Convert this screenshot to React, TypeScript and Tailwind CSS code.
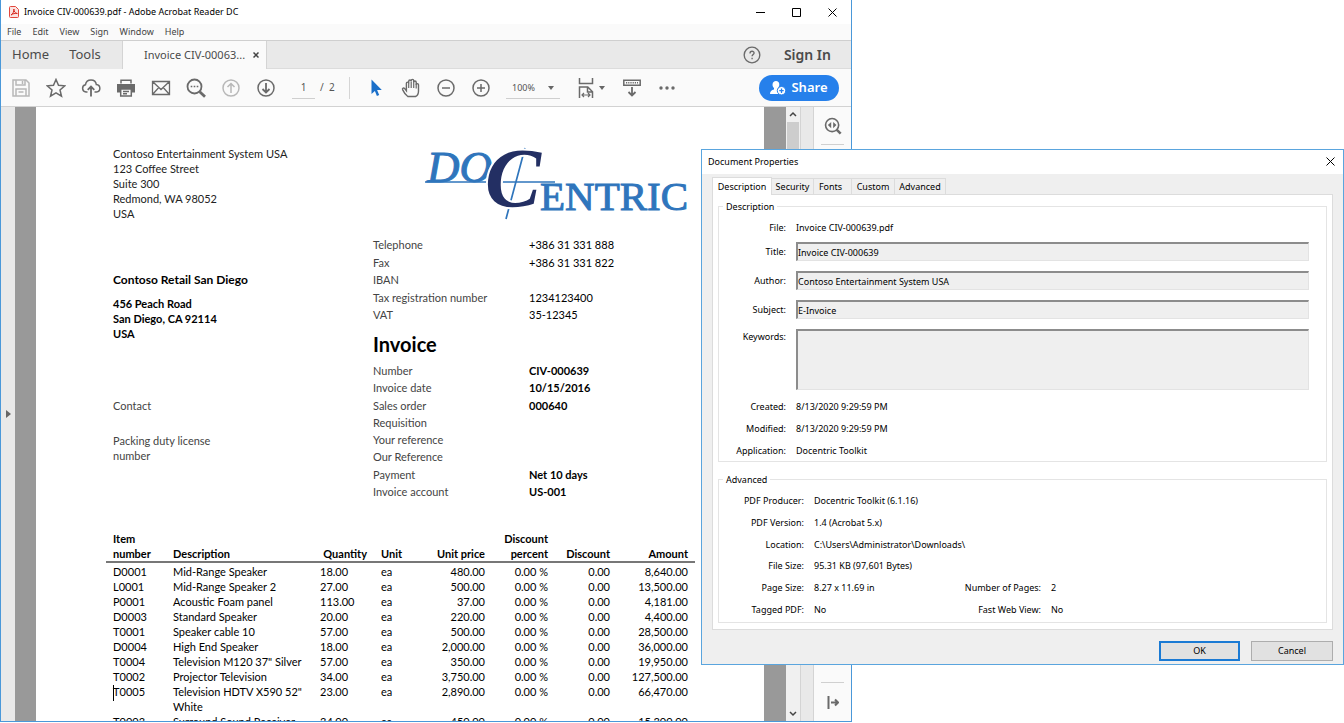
import type { ReactNode } from "react";
import { clsx } from "clsx";

function Icon({ children, size = 20, className }: { children: ReactNode; size?: number; className?: string }) {
  return (
    <svg
      width={size}
      height={size}
      viewBox="0 0 20 20"
      fill="none"
      stroke="currentColor"
      strokeWidth="1.5"
      className={className}
      aria-hidden="true"
    >
      {children}
    </svg>
  );
}

function ToolButton({ label, dim, children }: { label: string; dim?: boolean; children: ReactNode }) {
  return (
    <button
      type="button"
      aria-label={label}
      className={clsx("flex h-8 w-[35px] shrink-0 items-center justify-center", dim ? "text-[#b8b8b8]" : "text-[#6a6a6a]")}
    >
      <Icon>{children}</Icon>
    </button>
  );
}

function TitleBar() {
  return (
    <header className="flex h-6 shrink-0 items-center bg-white pr-px pl-2">
      <svg width="10" height="12" viewBox="0 0 10 12" fill="none" aria-hidden="true">
        <path d="M1.5.5h5l3 3v7a1 1 0 0 1-1 1h-7a1 1 0 0 1-1-1v-9a1 1 0 0 1 1-1Z" fill="#fbe3e1" stroke="#e2473c" />
        <path d="M2 9c2-1 3-3.500 2.900-6C5 5.500 6 7.300 8.300 7.500 6 7.200 4 7.600 2 9Z" stroke="#d9281e" />
      </svg>
      <h1 className="ml-[5px] flex-1 text-[9px] leading-3 text-black">Invoice CIV-000639.pdf - Adobe Acrobat Reader DC</h1>
      <div className="flex text-black">
        <button type="button" aria-label="Minimize" className="flex h-6 w-9 items-center justify-center">
          <svg width="9" height="9" viewBox="0 0 9 9" stroke="currentColor" aria-hidden="true"><path d="M0 4.500h9" /></svg>
        </button>
        <button type="button" aria-label="Maximize" className="flex h-6 w-9 items-center justify-center">
          <svg width="9" height="9" viewBox="0 0 9 9" fill="none" stroke="currentColor" aria-hidden="true"><path d="M.5.5h8v8h-8z" /></svg>
        </button>
        <button type="button" aria-label="Close" className="flex h-6 w-9 items-center justify-center">
          <svg width="9" height="9" viewBox="0 0 9 9" stroke="currentColor" aria-hidden="true"><path d="M.5.5l8 8M8.500.5l-8 8" /></svg>
        </button>
      </div>
    </header>
  );
}

const menus = ["File", "Edit", "View", "Sign", "Window", "Help"];

function MenuBar() {
  return (
    <nav className="flex h-4 shrink-0 items-center gap-[11px] bg-[#fafafa] pl-[6px] text-[9px] leading-3 text-[#444]">
      {menus.map((m) => (
        <button key={m} type="button">{m}</button>
      ))}
    </nav>
  );
}

function TabBar() {
  return (
    <div className="flex h-[29px] shrink-0 border-t border-[#cfcfcf] bg-[#e9e9e9] text-[#4b4b4b]">
      <button type="button" className="w-[59px] text-[13px]">Home</button>
      <button type="button" className="w-[50px] text-[13px]">Tools</button>
      <div className="ml-3 flex w-[145px] items-center justify-between border-x border-[#d4d4d4] bg-[#fafafa] pr-[7px] pl-[21px]">
        <span className="text-[11px] whitespace-nowrap">Invoice CIV-00063...</span>
        <button type="button" aria-label="Close tab">
          <svg width="6" height="6" viewBox="0 0 6 6" stroke="#444" strokeWidth="1.500" aria-hidden="true"><path d="M.5.5l5 5M5.500.5l-5 5" /></svg>
        </button>
      </div>
      <div className="flex flex-1 items-center justify-end gap-[23px] border-b border-[#dcdcdc] pr-5">
        <button type="button" aria-label="Help" className="text-[#6a6a6a]">
          <Icon size={18}>
            <circle cx="10" cy="10" r="8.700" />
            <path d="M7.800 8.200c0-3.200 4.600-3 4.500-.3 0 1.600-2.200 1.700-2.200 3.600M10.100 13v1.600" />
          </Icon>
        </button>
        <button type="button" className="text-sm font-semibold">Sign In</button>
      </div>
    </div>
  );
}

function Toolbar() {
  return (
    <div className="flex h-[38px] shrink-0 items-center border-b border-[#d2d2d2] bg-[#fafafa] pl-0.5 text-[#555]">
      <ToolButton label="Save" dim>
        <path d="M2 2h13l3 3v13H2zM5 2v5h9V2M11.500 3v3M5 18v-7h10v7M7.500 14h5" />
      </ToolButton>
      <ToolButton label="Bookmark">
        <path d="M10 1.500l2.500 5.800 6.300.5-4.800 4.200 1.500 6.200L10 14.900l-5.500 3.300L6 12 1.200 7.800l6.300-.5z" />
      </ToolButton>
      <ToolButton label="Upload">
        <path d="M6.500 14H5a3.700 3.700 0 0 1-.5-7.300C5 3.500 7.500 2 10 2c3 0 5 2 5.300 4.500C20 7 20 13.500 15.500 14h-2" />
        <path d="M10 18.500V9M6.700 11.800 10 8.500l3.300 3.300" strokeWidth="1.800" />
      </ToolButton>
      <ToolButton label="Print">
        <path d="M5 5.500V2.200h10v3.300" />
        <path d="M1 6h18v8.500h-3V11H4v3.500H1z" fill="currentColor" stroke="none" />
        <path d="M4.700 11h10.600v7H4.700zM7 13.500h6M7 15.800h4" />
      </ToolButton>
      <ToolButton label="Mail">
        <path d="M1.500 3.500h17v13h-17zM1.500 3.500 10 11.500l8.500-8M1.500 16.500l6.300-7M18.500 16.500l-6.300-7" strokeWidth="1.300" />
      </ToolButton>
      <ToolButton label="Find">
        <circle cx="8.500" cy="8.500" r="7" strokeWidth="1.800" />
        <path d="M13.700 13.700l5.300 5" strokeWidth="2.800" />
        <path d="M4.700 8.500h1.600M7.700 8.500h1.600M10.700 8.500h1.600" />
      </ToolButton>
      <ToolButton label="Previous page" dim>
        <circle cx="10" cy="10" r="8" />
        <path d="M10 15V5.500M6.500 9 10 5.500 13.500 9" />
      </ToolButton>
      <ToolButton label="Next page">
        <circle cx="10" cy="10" r="8" />
        <path d="M10 5v9.500M6.500 11l3.500 3.500 3.500-3.500" strokeWidth="1.800" />
      </ToolButton>
      <input
        aria-label="Page number"
        defaultValue="1"
        className="ml-[9px] h-[22px] w-[23px] border-b border-[#cfcfcf] bg-transparent text-center text-[10px]"
      />
      <span className="ml-[5px] w-[14px] text-[10px] whitespace-nowrap">/&nbsp; 2</span>
      <span className="mr-2 ml-[15px] h-[22px] w-px bg-[#d5d5d5]" />
      <ToolButton label="Select">
        <path d="M5.500 1.500v14.500l3.400-3.100 2 5 2.300-1-2.100-4.800h4.700z" fill="#1a6fc9" stroke="none" />
      </ToolButton>
      <ToolButton label="Pan">
        <path
          d="M6.800 18.500C5 17.300 2.700 14 1.600 11.600c-.6-1.500 1.200-2.200 2.100-1l1.700 2.200V5.300c0-1.600 2.300-1.600 2.300 0V3.200c0-1.700 2.500-1.700 2.500 0v-.6c0-1.600 2.500-1.600 2.500 0v1.600c0-1.600 2.500-1.600 2.500 0v2.500c0-1.500 2.300-1.500 2.300 0V13c0 3-1.300 4.800-3 5.500z"
          strokeWidth="1.400"
        />
        <path d="M7.700 5v5M10.200 3.500V10M12.700 4v6M15.200 6v4.500" strokeWidth="1.200" />
      </ToolButton>
      <ToolButton label="Zoom out">
        <circle cx="10" cy="10" r="8" />
        <path d="M6 10h8" />
      </ToolButton>
      <ToolButton label="Zoom in">
        <circle cx="10" cy="10" r="8" />
        <path d="M6 10h8M10 6v8" />
      </ToolButton>
      <div className="relative mr-3 ml-2 h-[22px] w-[54px] border-b border-[#cfcfcf]">
        <select aria-label="Zoom level" className="block h-[22px] w-full appearance-none bg-transparent pl-[6px] text-[9px] leading-[22px]">
          <option>100%</option>
        </select>
        <svg width="6" height="4" viewBox="0 0 6 4" className="absolute top-[9px] right-[6px]" aria-hidden="true"><path d="M0 0h6L3 4z" fill="#666" /></svg>
      </div>
      <button type="button" aria-label="Fit page" className="flex h-8 w-9 items-center justify-center gap-[3px] text-[#6a6a6a]">
        <Icon>
          <path d="M3.500 0v5.500h13V0M3.500 20V9h8.300l4.700 4.700V20M11.500 9v5h5" />
          <path d="M6 17h8M8 15l-2 2 2 2M12 15l2 2-2 2" strokeWidth="1.200" />
        </Icon>
        <svg width="6" height="4" viewBox="0 0 6 4" aria-hidden="true"><path d="M0 0h6L3 4z" fill="#666" /></svg>
      </button>
      <div className="w-1.5" />
      <ToolButton label="Read mode">
        <path d="M1.800 2.300h16.400v5H1.800z" />
        <path d="M4 4.800h12" strokeWidth="1.500" strokeDasharray="1.200 1" />
        <path d="M10 9v8.500M6.500 14l3.500 3.500 3.500-3.500" strokeWidth="1.800" />
      </ToolButton>
      <ToolButton label="More tools">
        <g fill="currentColor" stroke="none">
          <circle cx="4" cy="10" r="1.700" />
          <circle cx="10" cy="10" r="1.700" />
          <circle cx="16" cy="10" r="1.700" />
        </g>
      </ToolButton>
      <button
        type="button"
        className="mr-3 ml-auto flex h-[26px] w-20 items-center justify-center gap-[5px] rounded-full bg-[#2680eb] text-[13px] font-semibold text-white"
      >
        <svg width="16" height="14" viewBox="0 0 16 14" fill="#fff" aria-hidden="true">
          <path d="M6 0c4.200 0 4 5.500 1.800 7 0 1 .5 1.500 1.500 2L8 13H0c0-3 1.500-3.700 4-4.500V7C1.800 5.500 1.800 0 6 0Z" />
          <circle cx="11.500" cy="9.700" r="4.200" stroke="#2680eb" />
          <path d="M11.500 7.500v4.400M9.300 9.700h4.400" stroke="#2680eb" strokeWidth="1.300" />
        </svg>
        Share
      </button>
    </div>
  );
}

function Logo() {
  return (
    <svg width="268" height="74" viewBox="0 0 268 74" className="ml-[51px] overflow-visible" role="img" aria-label="Docentric">
      <g fontFamily="Liberation Serif, serif" fill="#2f75bc" stroke="#2f75bc" strokeWidth="1">
        <text x="3" y="36" fontSize="45" fontStyle="italic">DO</text>
        <text x="116" y="64" fontSize="41">ENTRIC</text>
      </g>
      <path d="M1 36h130M101 2 82 73" stroke="#2f75bc" strokeWidth="1.700" />
      <text
        x="61"
        y="61"
        fontFamily="Liberation Serif, serif"
        fontSize="84"
        fontStyle="italic"
        fontWeight="bold"
        fill="#232f63"
        stroke="#fff"
        strokeWidth="4"
        paintOrder="stroke"
      >
        C
      </text>
    </svg>
  );
}

const company = [
  ["Telephone", "+386 31 331 888"],
  ["Fax", "+386 31 331 822"],
  ["IBAN", ""],
  ["Tax registration number", "1234123400"],
  ["VAT", "35-12345"],
];

const invoice = [
  ["Number", "CIV-000639"],
  ["Invoice date", "10/15/2016"],
  ["Sales order", "000640"],
  ["Requisition", ""],
  ["Your reference", ""],
  ["Our Reference", ""],
  ["Payment", "Net 10 days"],
  ["Invoice account", "US-001"],
];

const lines = [
  ["D0001", "Mid-Range Speaker", "18.00", "480.00", "8,640.00"],
  ["L0001", "Mid-Range Speaker 2", "27.00", "500.00", "13,500.00"],
  ["P0001", "Acoustic Foam panel", "113.00", "37.00", "4,181.00"],
  ["D0003", "Standard Speaker", "20.00", "220.00", "4,400.00"],
  ["T0001", "Speaker cable 10", "57.00", "500.00", "28,500.00"],
  ["D0004", "High End Speaker", "18.00", "2,000.00", "36,000.00"],
  ["T0004", 'Television M120 37" Silver', "57.00", "350.00", "19,950.00"],
  ["T0002", "Projector Television", "34.00", "3,750.00", "127,500.00"],
  ["T0005", 'Television HDTV X590 52" White', "23.00", "2,890.00", "66,470.00"],
  ["T0003", "Surround Sound Receiver", "34.00", "450.00", "15,300.00"],
];

// row the text cursor is parked on
const caretItem = "T0005";

function Facts({ rows, bold, className }: { rows: string[][]; bold?: boolean; className?: string }) {
  return (
    <dl className={clsx("flex flex-col justify-between leading-[17px]", className)}>
      {rows.map(([label, value]) => (
        <div key={label} className="flex h-[17px]">
          <dt className="w-[156px] text-[#444]">{label}</dt>
          <dd className={clsx("text-black", bold && "font-bold")}>{value}</dd>
        </div>
      ))}
    </dl>
  );
}

function LineItems() {
  return (
    <table className="mt-[31px] w-[589px] table-fixed text-black">
      <colgroup>
        <col className="w-[60px]" />
        <col className="w-[147px]" />
        <col className="w-[61px]" />
        <col className="w-[54px]" />
        <col className="w-[64px]" />
        <col className="w-[63px]" />
        <col className="w-[62px]" />
        <col className="w-[78px]" />
      </colgroup>
      <thead>
        <tr className="border-b-2 border-[#777] text-left align-bottom *:px-[7px] *:font-bold">
          <th>Item<br />number</th>
          <th>Description</th>
          <th className="text-right">Quantity</th>
          <th>Unit</th>
          <th className="text-right whitespace-nowrap">Unit price</th>
          <th className="text-right">Discount percent</th>
          <th className="text-right">Discount</th>
          <th className="text-right">Amount</th>
        </tr>
      </thead>
      <tbody className="before:block before:h-px">
        {lines.map(([item, name, qty, price, amount]) => (
          <tr key={item} className="align-top *:px-[7px]">
            <td>
              <span className="relative">
                {item === caretItem && <span className="absolute top-0 left-0 h-4 w-px bg-black" />}
                {item}
              </span>
            </td>
            <td>{name}</td>
            <td>{qty}</td>
            <td>ea</td>
            <td className="text-right">{price}</td>
            <td className="text-right whitespace-nowrap">0.00 %</td>
            <td className="text-right">0.00</td>
            <td className="text-right">{amount}</td>
          </tr>
        ))}
      </tbody>
    </table>
  );
}

function InvoicePage() {
  return (
    <article className="min-w-0 flex-1 overflow-hidden bg-white pt-[39px] pl-[70px] font-['Lato',sans-serif] text-[11px] leading-[15px]">
      <div className="flex pl-[7px]">
        <div className="w-[260px] text-[#222]">
          <address className="not-italic">
            Contoso Entertainment System USA<br />
            123 Coffee Street<br />
            Suite 300<br />
            Redmond, WA 98052<br />
            USA
          </address>
          <h2 className="mt-[50px] text-xs leading-[18px] font-bold text-black">Contoso Retail San Diego</h2>
          <address className="mt-[7px] font-bold text-black not-italic">
            456 Peach Road<br />
            San Diego, CA 92114<br />
            USA
          </address>
          <p className="mt-[57px] text-[#444]">Contact</p>
          <p className="mt-5 w-[120px] text-[#444]">Packing duty license number</p>
        </div>
        <div>
          <Logo />
          <Facts rows={company} className="mt-4 h-[87px]" />
          <h2 className="mt-[9px] text-xl leading-6 font-bold text-black">Invoice</h2>
          <Facts rows={invoice} bold className="mt-[6px] h-[138px]" />
        </div>
      </div>
      <LineItems />
    </article>
  );
}

function Viewer() {
  return (
    <div className="flex min-h-0 flex-1">
      <button type="button" aria-label="Show navigation pane" className="flex w-[14px] shrink-0 items-center justify-center bg-[#e9e9e9]">
        <svg width="5" height="8" viewBox="0 0 5 8" aria-hidden="true"><path d="M0 0v8l5-4z" fill="#666" /></svg>
      </button>
      <div className="w-[21px] shrink-0 bg-[#999]" />
      <InvoicePage />
      <div className="w-[22px] shrink-0 bg-[#999]" />
      <div className="flex w-[14px] shrink-0 flex-col items-center justify-between bg-[#f0f0f0] text-[#444]">
        <div className="flex h-[300px] w-full flex-col items-center">
          <svg width="8" height="15" viewBox="0 0 8 15" fill="none" stroke="currentColor" strokeWidth="1.500" aria-hidden="true"><path d="M1 9l3-3 3 3" /></svg>
          <div className="w-3 flex-1 bg-[#cdcdcd]" />
        </div>
        <svg width="8" height="15" viewBox="0 0 8 15" fill="none" stroke="currentColor" strokeWidth="1.500" aria-hidden="true"><path d="M1 6l3 3 3-3" /></svg>
      </div>
      <div className="w-[14px] shrink-0 border-x border-[#d4d4d4] bg-[#e9e9e9]" />
      <aside className="flex w-[37px] shrink-0 flex-col items-center justify-between bg-[#fafafa] pb-2 text-[#6a6a6a]">
        <button type="button" aria-label="Search tools" className="flex h-[38px] w-[23px] items-center justify-center border-b border-[#d0d0d0]">
          <Icon size={18}>
            <circle cx="9" cy="9" r="7.300" strokeWidth="1.800" />
            <path d="M14 14l4.500 4.500" strokeWidth="2.800" />
            <path d="M8 5.500v7L4.300 9zM10.200 5.500v7L13.800 9z" fill="currentColor" stroke="none" />
          </Icon>
        </button>
        <button type="button" aria-label="Collapse pane" className="flex h-[31px] w-[23px] items-end justify-center border-t border-[#d0d0d0] pb-1">
          <svg width="12" height="13" viewBox="0 0 12 13" fill="none" stroke="currentColor" strokeWidth="2" aria-hidden="true">
            <path d="M1.500 0v13M4 6.500h7M8 3.500l3 3-3 3" />
          </svg>
        </button>
      </aside>
    </div>
  );
}

const dialogTabs = [
  { label: "Security", className: "w-[42px]" },
  { label: "Fonts", className: "w-[38px] pr-1" },
  { label: "Custom", className: "w-[43px]" },
  { label: "Advanced", className: "w-[51px]" },
];

const textFields = [
  { id: "title", label: "Title:", value: "Invoice CIV-000639" },
  { id: "author", label: "Author:", value: "Contoso Entertainment System USA" },
  { id: "subject", label: "Subject:", value: "E-Invoice" },
];

const stamps = [
  ["Created:", "8/13/2020 9:29:59 PM"],
  ["Modified:", "8/13/2020 9:29:59 PM"],
  ["Application:", "Docentric Toolkit"],
];

const advanced = [
  ["PDF Producer:", "Docentric Toolkit (6.1.16)"],
  ["PDF Version:", "1.4 (Acrobat 5.x)"],
  ["Location:", "C:\\Users\\Administrator\\Downloads\\"],
  ["File Size:", "95.31 KB (97,601 Bytes)"],
  ["Page Size:", "8.27 x 11.69 in", "Number of Pages:", "2"],
  ["Tagged PDF:", "No", "Fast Web View:", "No"],
];

const sunken = "flex-1 border-t-2 border-l-2 border-r border-b border-t-[#8c8c8c] border-l-[#8c8c8c] border-r-[#e3e3e3] border-b-[#e3e3e3] bg-[#efefef]";

function PropertiesDialog() {
  return (
    <section
      role="dialog"
      aria-labelledby="dialog-title"
      className="absolute top-[149px] right-0 left-[701px] border border-[#5aa5de] bg-[#efefef] text-[9px] leading-[15px] text-black"
    >
      <header className="flex h-6 items-center justify-between bg-white pr-2 pb-px pl-[6px]">
        <h2 id="dialog-title">Document Properties</h2>
        <button type="button" aria-label="Close dialog">
          <svg width="9" height="9" viewBox="0 0 9 9" stroke="currentColor" aria-hidden="true"><path d="M.5.5l8 8M8.500.5l-8 8" /></svg>
        </button>
      </header>
      <div className="px-[10px] pt-[3px] pb-[3px]">
        <div role="tablist" className="flex items-end">
          <button type="button" role="tab" aria-selected="true" className="relative -mb-px h-[18px] w-[60px] border border-b-0 border-[#dcdcdc] bg-white">
            Description
          </button>
          {dialogTabs.map((t) => (
            <button
              key={t.label}
              type="button"
              role="tab"
              aria-selected="false"
              className={clsx("h-4 border-t border-r border-[#dcdcdc]", t.className)}
            >
              {t.label}
            </button>
          ))}
        </div>
        <div className="border border-[#dcdcdc] bg-white px-[5px] pt-1 pb-[6px]">
          <fieldset className="border border-[#e4e4e4] pt-1">
            <legend className="ml-1 px-[3px]">Description</legend>
            <div className="mb-[5px] grid h-[19px] grid-cols-[67px_1fr] items-center gap-[10px]">
              <span className="text-right">File:</span>
              <span>Invoice CIV-000639.pdf</span>
            </div>
            <div className="flex flex-col gap-[10px] pr-[17px]">
              {textFields.map((f) => (
                <div key={f.id} className="flex h-[19px] gap-[10px]">
                  <label htmlFor={f.id} className="w-[67px] pt-0.5 text-right">{f.label}</label>
                  <input id={f.id} readOnly defaultValue={f.value} className={sunken} />
                </div>
              ))}
              <div className="flex gap-[10px]">
                <label htmlFor="keywords" className="w-[67px] text-right">Keywords:</label>
                <textarea id="keywords" readOnly className={clsx("h-[61px] resize-none", sunken)} />
              </div>
            </div>
            <dl className="mt-[5px]">
              {stamps.map(([label, value]) => (
                <div key={label} className="grid h-[22px] grid-cols-[67px_1fr] items-center gap-[10px]">
                  <dt className="text-right">{label}</dt>
                  <dd>{value}</dd>
                </div>
              ))}
            </dl>
          </fieldset>
          <fieldset className="mt-[10px] border border-[#e4e4e4] pt-[3px] pb-0.5">
            <legend className="ml-1 px-[3px]">Advanced</legend>
            <dl className="grid h-[130px] grid-rows-6">
              {advanced.map(([label, value, label2, value2]) => (
                <div key={label} className="grid grid-cols-[85px_117px_100px_1fr] items-center gap-[10px] whitespace-nowrap">
                  <dt className="text-right">{label}</dt>
                  <dd>{value}</dd>
                  {label2 && <dt className="text-right">{label2}</dt>}
                  {value2 && <dd>{value2}</dd>}
                </div>
              ))}
            </dl>
          </fieldset>
        </div>
        <div className="mt-[11px] flex justify-end gap-[11px]">
          <button type="button" className="h-5 w-[81px] border-2 border-[#1a7ad4] bg-[#e1e1e1] leading-3">OK</button>
          <button type="button" className="h-5 w-[82px] border border-[#adadad] bg-[#e1e1e1] leading-3">Cancel</button>
        </div>
      </div>
    </section>
  );
}

export default function App() {
  return (
    <main className="relative h-screen overflow-hidden bg-white pr-[492px] pb-px font-['Noto_Sans',sans-serif]">
      <div className="flex h-full flex-col border-x border-b border-[#4a98d9]">
        <TitleBar />
        <MenuBar />
        <TabBar />
        <Toolbar />
        <Viewer />
      </div>
      <PropertiesDialog />
    </main>
  );
}
